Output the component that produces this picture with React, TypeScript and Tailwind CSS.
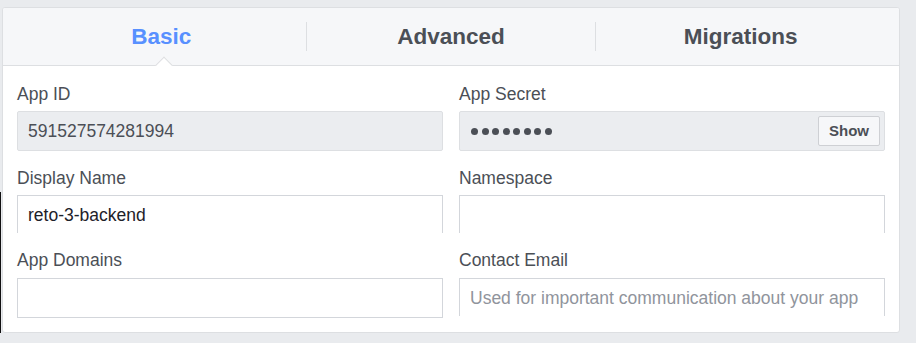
import React from "react";

const tabs = ["Basic", "Advanced", "Migrations"];

const Label = ({ children }: { children: React.ReactNode }) => (
  <div className="h-[22px] mb-[6px] text-[17.5px] leading-[22px] text-[#4b4f56]">{children}</div>
);

const App = () => {
  return (
    <div
      className="relative w-[916px] h-[343px] bg-[#e9ebee] pt-[7px] pl-[2px] overflow-hidden"
      style={{ fontFamily: '"Liberation Sans", Arial, sans-serif' }}
    >
      {/* stray dark edge from the capture */}
      <div className="absolute left-0 top-[192px] w-[1px] h-[141px] bg-[#111]" />

      <div className="w-[898px] h-[326px] bg-white border border-[#dddfe2] rounded-[3px] overflow-hidden">
        <div className="relative h-[58px] bg-[#f6f7f9] border-b border-[#dddfe2] flex px-[14px]">
          {tabs.map((tab, i) => (
            <div
              key={tab}
              className={`flex-1 flex items-center justify-center my-[14px] ${i > 0 ? "border-l border-[#dddfe2]" : ""}`}
            >
              <span
                className={`text-[22.5px] font-bold ${i === 0 ? "text-[#5890ff]" : "text-[#4b4f56]"}`}
              >
                {tab}
              </span>
            </div>
          ))}
          <div className="absolute left-[155px] top-[51px] w-[12px] h-[12px] bg-white border-l border-t border-[#dddfe2] rotate-45" />
        </div>

        <div className="grid grid-cols-2 gap-x-[16px] px-[14px] pt-[17px]">
          <div className="mb-[16px]">
            <Label>App ID</Label>
            <div className="h-[40px] bg-[#ebedf0] border border-[#dddfe2] rounded-[2px] flex items-center px-[10px] text-[17.5px] text-[#4b4f56]">
              591527574281994
            </div>
          </div>
          <div className="mb-[16px]">
            <Label>App Secret</Label>
            <div className="h-[40px] bg-[#ebedf0] border border-[#dddfe2] rounded-[2px] flex items-center justify-between pl-[11px] pr-[4px]">
              <div className="flex gap-[3.5px]">
                {Array.from({ length: 8 }).map((_, i) => (
                  <span key={i} className="w-[7px] h-[7px] rounded-full bg-[#4b4f56]" />
                ))}
              </div>
              <button className="h-[30px] w-[62px] bg-[#f6f7f9] border border-[#ced0d4] rounded-[2px] text-[15px] font-bold text-[#4b4f56]">
                Show
              </button>
            </div>
          </div>

          <div className="mb-[15px]">
            <Label>Display Name</Label>
            <div className="h-[40px]">
              <div className="h-[38px] border border-b-0 border-[#d3d6db] flex items-center px-[10px] pt-[2px] text-[17.5px] text-[#1d2129]">
                reto-3-backend
              </div>
            </div>
          </div>
          <div className="mb-[15px]">
            <Label>Namespace</Label>
            <div className="h-[40px]">
              <div className="h-[38px] border border-b-0 border-[#d3d6db]" />
            </div>
          </div>

          <div>
            <div className="h-[21px] mb-[7px] text-[17.5px] leading-[20px] text-[#4b4f56]">App Domains</div>
            <div className="h-[40px] border border-[#d3d6db]" />
          </div>
          <div>
            <div className="h-[21px] mb-[7px] text-[17.5px] leading-[20px] text-[#4b4f56]">Contact Email</div>
            <div className="h-[40px]">
              <div className="h-[38px] border border-b-0 border-[#d3d6db] flex items-center px-[10px] pt-[1px] text-[17.5px] text-[#90949c]">
                Used for important communication about your app
              </div>
            </div>
          </div>
        </div>
      </div>
    </div>
  );
};

export default App;
